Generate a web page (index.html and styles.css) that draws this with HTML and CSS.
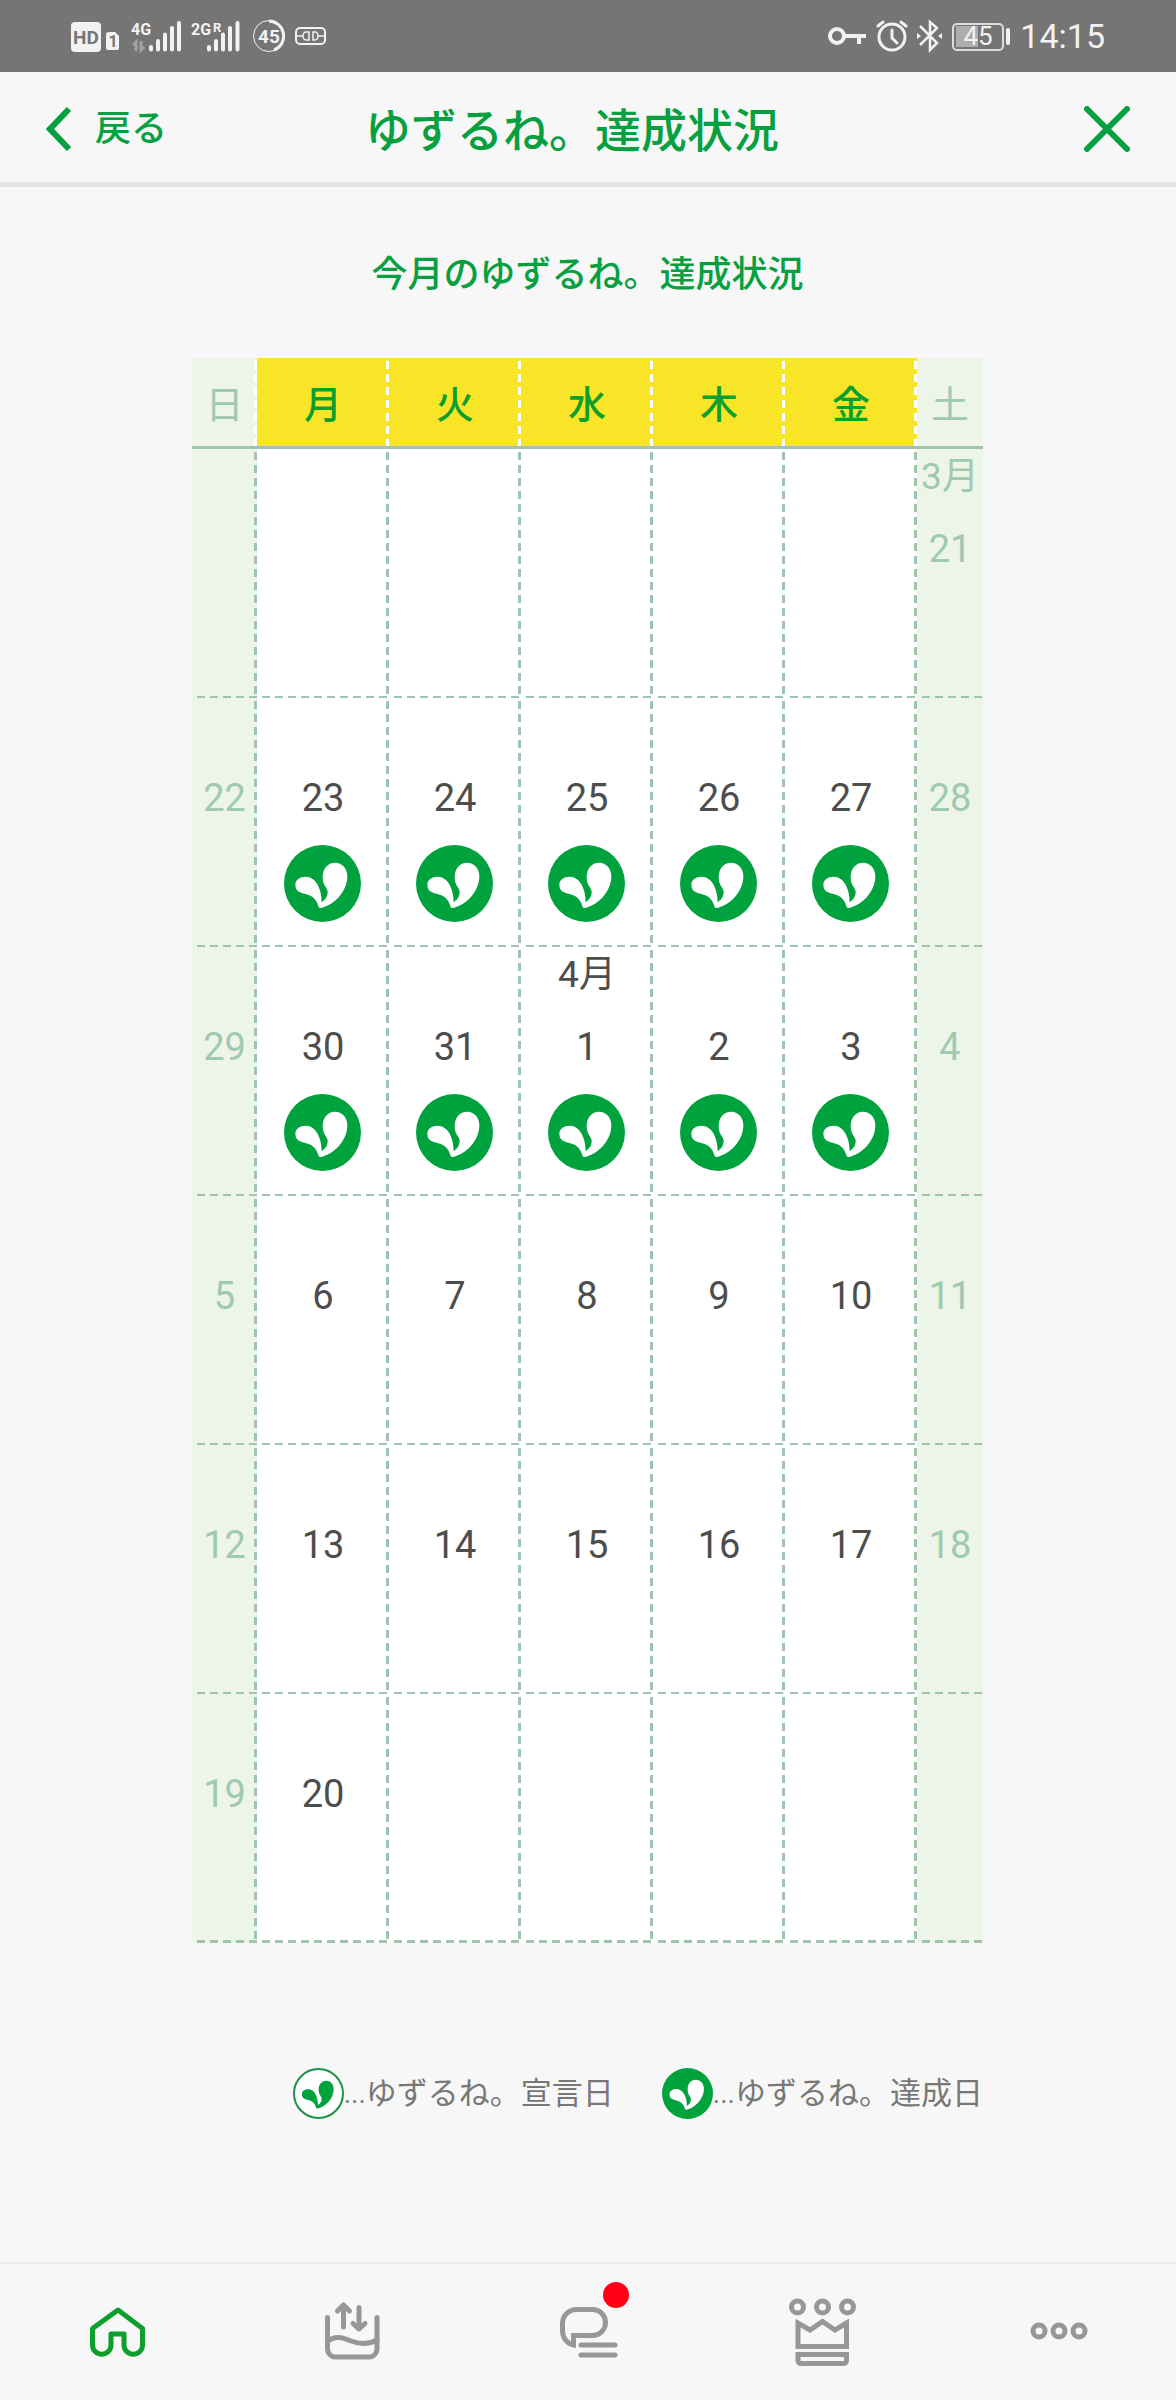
FILE: index.html
```html
<!DOCTYPE html>
<html lang="ja">
<head>
    <meta charset="UTF-8">
    <meta name="viewport" content="width=device-width, initial-scale=1.0">
    <title>ゆずるね。達成状況</title>
    <link rel="stylesheet" href="styles.css">
</head>
<body>
    <svg class="defs" aria-hidden="true">
        <symbol id="leaf" viewBox="0 0 231 231">
            <path d="M104 186C98 168 94 160 76 151C58 143 34 145 34 119C34 104 48 95 65 95C96 95 113 132 113 172C125 164 131 154 131 142C131 126 116 124 116 97C116 70 132 53 153 53C174 53 190 70 190 94C190 140 150 180 114 188Q107 191 104 186Z"/>
        </symbol>
    </svg>

    <div class="status-bar">
        <div class="status-left">
            <svg width="50" height="36" viewBox="0 0 50 36">
                <rect x="0" y="4" width="30" height="30" rx="4" fill="#f2f2f2"/>
                <text x="15" y="26" font-size="19" font-weight="700" text-anchor="middle" fill="#757575">HD</text>
                <path d="M35 17a3 3 0 0 1 3-3h6l4 4v12a2 2 0 0 1-2 2h-9a2 2 0 0 1-2-2z" fill="#f2f2f2"/>
                <text x="42" y="29" font-size="16" font-weight="700" text-anchor="middle" fill="#757575">1</text>
            </svg>
            <svg width="50" height="36" viewBox="0 0 50 36">
                <text x="0" y="17" font-size="16" font-weight="700" fill="#f2f2f2">4G</text>
                <path d="M5 33v-9l-3 3M10 23v9l3-3" fill="none" stroke="#a2a2a2" stroke-width="3"/>
                <path d="M20 29v2.500M27 23v8.500M34 16.500v15M41 10v21.500M48 5v26.500" stroke="#f2f2f2" stroke-width="4" stroke-linecap="round"/>
            </svg>
            <svg width="50" height="36" viewBox="0 0 50 36">
                <text x="0" y="17" font-size="16" font-weight="700" fill="#f2f2f2">2G</text>
                <text x="22" y="14" font-size="13" font-weight="700" fill="#f2f2f2">R</text>
                <path d="M18 29v2.500M25 23v8.500M32 16.500v15M39 10v21.500M46.500 5v26.500" stroke="#f2f2f2" stroke-width="4" stroke-linecap="round"/>
            </svg>
            <svg width="34" height="36" viewBox="0 0 34 36">
                <circle cx="18" cy="18" r="15.500" fill="none" stroke="#f2f2f2" stroke-width="1"/>
                <path d="M18 3a15 15 0 0 1 5 29" fill="none" stroke="#f2f2f2" stroke-width="3"/>
                <text x="18" y="25" font-size="19" font-weight="700" text-anchor="middle" fill="#f2f2f2">45</text>
            </svg>
            <svg width="32" height="36" viewBox="0 0 32 36">
                <g fill="none" stroke="#f2f2f2" stroke-width="1.500">
                    <rect x="1" y="10" width="29" height="16" rx="4" stroke-width="2"/>
                    <path d="M2 18h6M23 18h7M14 14h-3a3 4 0 0 0 0 8h3zM18 14h2a3 4 0 0 1 0 8h-2z"/>
                </g>
            </svg>
        </div>
        <div class="status-right">
            <svg width="39" height="36" viewBox="0 0 39 36">
                <path d="M17 18h21M31 18v8" fill="none" stroke="#f2f2f2" stroke-width="4"/>
                <circle cx="9" cy="18" r="7" fill="none" stroke="#f2f2f2" stroke-width="4"/>
            </svg>
            <svg width="32" height="36" viewBox="0 0 32 36">
                <g fill="none" stroke="#f2f2f2" stroke-width="3" stroke-linecap="round">
                    <circle cx="16" cy="19" r="13"/>
                    <path d="M16 12v8l5 5"/>
                    <path d="M2 8l5-4M30 8l-5-4"/>
                </g>
            </svg>
            <svg width="26" height="36" viewBox="0 0 26 36">
                <path d="M3 8l17 17-7 7V4l7 6L3 27" fill="none" stroke="#f2f2f2" stroke-width="2.500"/>
                <path d="M0 15l4 3-4 3zM25 15l-4 3 4 3z" fill="#f2f2f2"/>
            </svg>
            <svg width="59" height="36" viewBox="0 0 59 36">
                <rect x="1" y="6" width="50" height="26" rx="4" fill="none" stroke="#dcdcdc" stroke-width="2"/>
                <rect x="4" y="8" width="22" height="21" fill="#adadad"/>
                <path d="M56 12v13" stroke="#f2f2f2" stroke-width="4" stroke-linecap="round"/>
                <text x="26" y="27" font-size="26" text-anchor="middle" fill="#f2f2f2">45</text>
            </svg>
            <span class="clock">14:15</span>
        </div>
    </div>

    <header class="header">
        <button class="back" type="button">
            <svg width="26" height="44" viewBox="0 0 26 44">
                <path d="M23 2L4 22L23 42" fill="none" stroke="currentColor" stroke-width="6"/>
            </svg>
            戻る
        </button>
        <h1>ゆずるね。達成状況</h1>
        <button class="close" type="button" aria-label="閉じる">
            <svg width="46" height="46" viewBox="0 0 46 46">
                <path d="M3 3L43 43M43 3L3 43" stroke="currentColor" stroke-width="6" stroke-linecap="round"/>
            </svg>
        </button>
    </header>

    <main class="content">
        <h2>今月のゆずるね。達成状況</h2>
        <table class="calendar">
            <thead>
                <tr>
                    <th class="weekend">日</th>
                    <th>月</th>
                    <th>火</th>
                    <th>水</th>
                    <th>木</th>
                    <th>金</th>
                    <th class="weekend">土</th>
                </tr>
            </thead>
            <tbody>
                <tr>
                    <td class="weekend"></td>
                    <td></td>
                    <td></td>
                    <td></td>
                    <td></td>
                    <td></td>
                    <td class="weekend"><span class="month">3月</span><span class="date">21</span></td>
                </tr>
                <tr>
                    <td class="weekend"><span class="month"></span><span class="date">22</span></td>
                    <td><span class="month"></span><span class="date">23</span><svg class="mark done"><use href="#leaf"/></svg></td>
                    <td><span class="month"></span><span class="date">24</span><svg class="mark done"><use href="#leaf"/></svg></td>
                    <td><span class="month"></span><span class="date">25</span><svg class="mark done"><use href="#leaf"/></svg></td>
                    <td><span class="month"></span><span class="date">26</span><svg class="mark done"><use href="#leaf"/></svg></td>
                    <td><span class="month"></span><span class="date">27</span><svg class="mark done"><use href="#leaf"/></svg></td>
                    <td class="weekend"><span class="month"></span><span class="date">28</span></td>
                </tr>
                <tr>
                    <td class="weekend"><span class="month"></span><span class="date">29</span></td>
                    <td><span class="month"></span><span class="date">30</span><svg class="mark done"><use href="#leaf"/></svg></td>
                    <td><span class="month"></span><span class="date">31</span><svg class="mark done"><use href="#leaf"/></svg></td>
                    <td><span class="month">4月</span><span class="date">1</span><svg class="mark done"><use href="#leaf"/></svg></td>
                    <td><span class="month"></span><span class="date">2</span><svg class="mark done"><use href="#leaf"/></svg></td>
                    <td><span class="month"></span><span class="date">3</span><svg class="mark done"><use href="#leaf"/></svg></td>
                    <td class="weekend"><span class="month"></span><span class="date">4</span></td>
                </tr>
                <tr>
                    <td class="weekend"><span class="month"></span><span class="date">5</span></td>
                    <td><span class="month"></span><span class="date">6</span></td>
                    <td><span class="month"></span><span class="date">7</span></td>
                    <td><span class="month"></span><span class="date">8</span></td>
                    <td><span class="month"></span><span class="date">9</span></td>
                    <td><span class="month"></span><span class="date">10</span></td>
                    <td class="weekend"><span class="month"></span><span class="date">11</span></td>
                </tr>
                <tr>
                    <td class="weekend"><span class="month"></span><span class="date">12</span></td>
                    <td><span class="month"></span><span class="date">13</span></td>
                    <td><span class="month"></span><span class="date">14</span></td>
                    <td><span class="month"></span><span class="date">15</span></td>
                    <td><span class="month"></span><span class="date">16</span></td>
                    <td><span class="month"></span><span class="date">17</span></td>
                    <td class="weekend"><span class="month"></span><span class="date">18</span></td>
                </tr>
                <tr>
                    <td class="weekend"><span class="month"></span><span class="date">19</span></td>
                    <td><span class="month"></span><span class="date">20</span></td>
                    <td></td>
                    <td></td>
                    <td></td>
                    <td></td>
                    <td class="weekend"></td>
                </tr>
            </tbody>
        </table>
        <ul class="legend">
            <li><svg class="mark declared"><use href="#leaf"/></svg><span class="dots">...</span>ゆずるね。宣言日</li>
            <li><svg class="mark done"><use href="#leaf"/></svg><span class="dots">...</span>ゆずるね。達成日</li>
        </ul>
    </main>

    <nav class="tab-bar">
        <a class="active" href="#home" aria-label="ホーム">
            <svg viewBox="0 0 72 72">
                <path d="M36 14L10.500 32.500V49a9.250 9.250 0 0 0 18.500 0V38H42V49a9.250 9.250 0 0 0 18.500 0V32.500Z" stroke-linejoin="round"/>
            </svg>
        </a>
        <a href="#pool" aria-label="入出金">
            <svg viewBox="0 0 72 72" stroke-linecap="round" stroke-linejoin="round">
                <path d="M10.500 21.500V53a8 8 0 0 0 8 8H52a8 8 0 0 0 8-8V21.500"/>
                <path d="M11 45C19 39 26 42 34 45S51 49 60 44"/>
                <path d="M26.500 31V9M20.500 15L26.500 9L32.500 15M42 11.500V33M36 27.500L42 33L48 27.500"/>
            </svg>
        </a>
        <a href="#message" aria-label="メッセージ">
            <svg viewBox="0 0 72 72">
                <path d="M21.500 48V39.500H40.500a13 13 0 0 0 0-26H24.500a14 14 0 0 0-14 14v7c0 7 4 13 11 14.500z"/>
                <path d="M29 49H63M29 59H63" stroke-linecap="round"/>
            </svg>
            <span class="badge"></span>
        </a>
        <a href="#rank" aria-label="ランキング">
            <svg viewBox="0 0 72 72">
                <circle cx="10.500" cy="11" r="6"/>
                <circle cx="35.500" cy="11" r="6"/>
                <circle cx="60.500" cy="11" r="6"/>
                <path d="M11 50.500V27L23 34L35.500 25.500L48 34L59.500 27V50.500Z"/>
                <path d="M11 58.500H59.500V64.500a3 3 0 0 1-3 3H14a3 3 0 0 1-3-3Z"/>
            </svg>
        </a>
        <a href="#more" aria-label="その他">
            <svg viewBox="0 0 72 72">
                <circle cx="17" cy="35" r="6"/>
                <circle cx="37" cy="35" r="6"/>
                <circle cx="57" cy="35" r="6"/>
            </svg>
        </a>
    </nav>
</body>
</html>
```
FILE: styles.css
```css
* {
    box-sizing: border-box;
}

body {
    margin: 0;
    min-height: 100vh;
    display: flex;
    flex-direction: column;
    font-family: Roboto, "Noto Sans CJK JP", sans-serif;
    font-size: 38px;
    color: #4d4d4d;
    background-color: #f7f7f7;
}

h1,
h2 {
    margin: 0;
    color: #06a040;
    font-weight: 500;
    text-align: center;
}

svg {
    display: block;
}

.defs {
    position: absolute;
    width: 0;
    height: 0;
}

/* status bar */
.status-bar {
    display: flex;
    justify-content: space-between;
    align-items: center;
    height: 72px;
    padding: 0 71px;
    background-color: #757575;
    color: #f2f2f2;
}

.status-left,
.status-right {
    display: flex;
    align-items: center;
    gap: 10px;
}

.status-right {
    gap: 9px;
}

.clock {
    font-size: 34px;
    line-height: 36px;
}

/* header */
.header {
    display: grid;
    grid-template-columns: 1fr auto 1fr;
    align-items: center;
    height: 115px;
    padding: 4px 46px 0 14px;
    border-bottom: 5px solid #e3e3e3;
}

.header h1 {
    padding-top: 4px;
    font-size: 46px;
    line-height: 64px;
}

.back,
.close {
    padding: 0;
    border: none;
    background: none;
    color: #06a040;
    cursor: pointer;
}

.back {
    display: flex;
    align-items: center;
    gap: 23px;
    justify-self: start;
    padding-left: 32px;
    font-family: inherit;
    font-size: 36px;
    font-weight: 500;
    line-height: 50px;
}

.close {
    justify-self: end;
}

.content {
    flex: 1;
    padding: 61px 193px 0 192px;
}

.content h2 {
    margin-bottom: 56px;
    font-size: 36px;
    line-height: 54px;
}

/* calendar */
.calendar {
    width: 100%;
    table-layout: fixed;
    border-collapse: separate;
    border-spacing: 0;
    text-align: center;
    background-color: #fff;
}

.calendar th,
.calendar td {
    padding: 0;
    background-repeat: no-repeat;
}

.calendar th {
    height: 91px;
    padding-bottom: 2px;
    font-weight: 500;
    color: #0d9f2c;
    background-color: #f9e528;
    background-image: repeating-linear-gradient(to bottom, transparent 0 3px, #fff 3px 11px, transparent 11px 13px);
    background-size: 3px 100%;
    background-position: right top;
    border-bottom: 3px solid #9fc5ae;
}

.calendar td {
    height: 249px;
    vertical-align: top;
    background-image:
        repeating-linear-gradient(to bottom, transparent 0 3px, #9fc5ae 3px 11px, transparent 11px 13px),
        repeating-linear-gradient(to right, transparent 0 5px, #9fc5ae 5px 13px);
    background-size: 3px 100%, 100% 2px;
    background-position: right top, left bottom;
}

.calendar .weekend {
    width: 65px;
    color: #9fcab0;
    background-color: #edf4e8;
}

.calendar th.weekend {
    font-weight: 400;
}

.calendar .weekend:last-child {
    width: 66px;
    background-size: 0 0, 100% 2px;
}

.calendar th.weekend:last-child {
    background-image: none;
}

.calendar tbody tr:last-child td {
    background-size: 3px 100%, 100% 3px;
}

.calendar tbody tr:last-child td:last-child {
    background-size: 0 0, 100% 3px;
}

.month,
.date {
    display: block;
    height: 54px;
    line-height: 56px;
}

.month {
    font-size: 37px;
}

.date {
    margin-top: 18px;
}

.mark {
    width: 77px;
    height: 77px;
    margin: 21px auto 0;
    border-radius: 50%;
}

.calendar .mark {
    position: relative;
    left: -1px;
}

.done {
    background-color: #00a23e;
    fill: #fff;
}

.declared {
    background-color: #fff;
    border: 2px solid #1d9147;
    fill: #00a23e;
}

.legend {
    display: flex;
    justify-content: flex-end;
    gap: 48px;
    margin: 125px 0 0;
    padding: 0;
    list-style: none;
    font-size: 31px;
    line-height: 51px;
    color: #777;
    white-space: nowrap;
}

.legend li {
    display: flex;
    align-items: center;
}

.legend .mark {
    width: 51px;
    height: 51px;
    margin: 0;
}

.dots {
    font-size: 28px;
}

/* bottom tabs */
.tab-bar {
    display: flex;
    height: 138px;
    padding-top: 32px;
    border-top: 2px solid #ebebeb;
}

.tab-bar a {
    position: relative;
    flex: 1;
    color: #979797;
}

.tab-bar .active {
    color: #0d9f2c;
}

.tab-bar svg {
    width: 72px;
    height: 72px;
    margin: 0 auto;
    fill: none;
    stroke: currentColor;
    stroke-width: 5px;
}

.badge {
    position: absolute;
    top: -14px;
    left: 50%;
    width: 26px;
    height: 26px;
    margin-left: 15px;
    border-radius: 50%;
    background-color: #ff0019;
}
```
